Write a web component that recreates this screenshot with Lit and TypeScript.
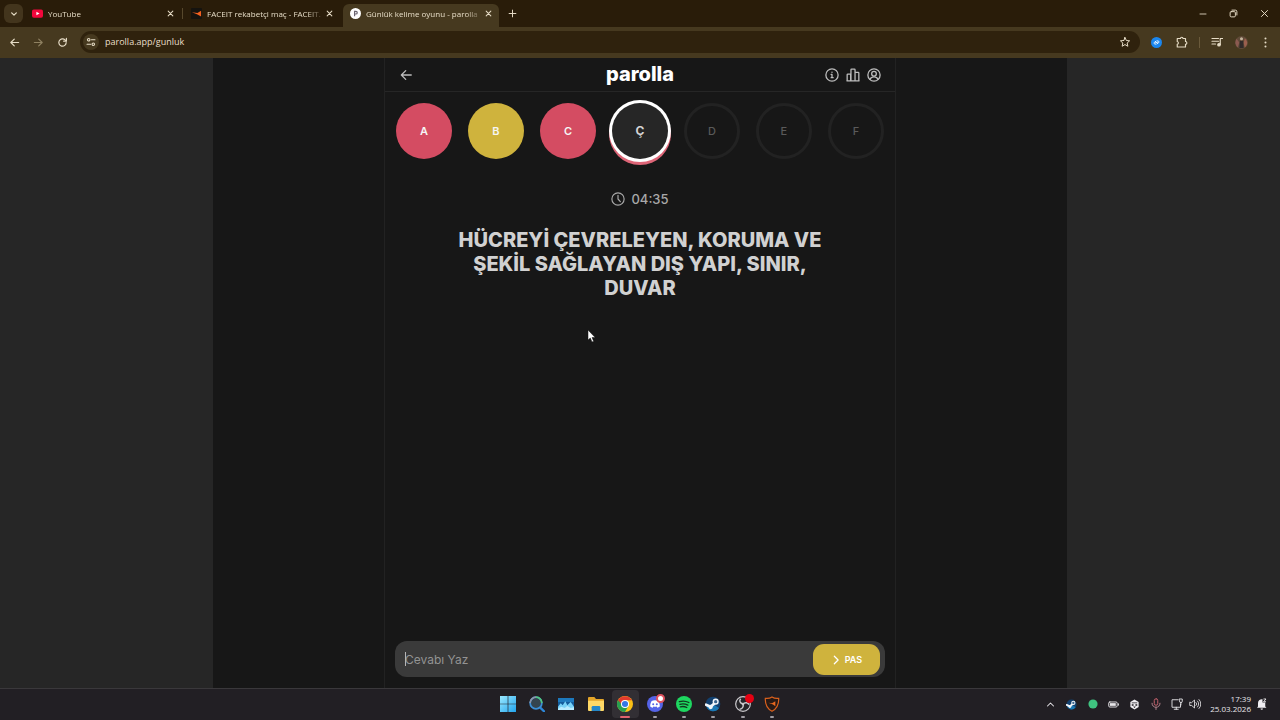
import { LitElement, html, css, svg, nothing } from "lit";
import { customElement, state } from "lit/decorators.js";
import { classMap } from "lit/directives/class-map.js";

const line = (body: unknown, size: number, width = 2) => html`
  <svg width=${size} height=${size} viewBox="0 0 24 24" fill="none" stroke="currentColor"
    stroke-width=${width} stroke-linecap="round" stroke-linejoin="round" aria-hidden="true">${body}</svg>`;

const art = (body: unknown, size: number) => html`
  <svg width=${size} height=${size} viewBox="0 0 24 24" aria-hidden="true">${body}</svg>`;

const glyph = {
  chevronDown: svg`<path d="M5 8.500l7 7 7-7"/>`,
  chevronUp: svg`<path d="M4 16l8-8 8 8"/>`,
  chevronRight: svg`<path d="M8 3l9 9-9 9"/>`,
  close: svg`<path d="M4 4l16 16M20 4L4 20"/>`,
  plus: svg`<path d="M12 3v18M3 12h18"/>`,
  minimize: svg`<path d="M3 12h18"/>`,
  restore: svg`<rect x="3" y="7" width="14" height="14" rx="3"/><path d="M8 3h9a4 4 0 0 1 4 4v9"/>`,
  back: svg`<path d="M21 12H4M11.500 4.500L4 12l7.500 7.500"/>`,
  forward: svg`<path d="M3 12h17M12.500 4.500L20 12l-7.500 7.500"/>`,
  reload: svg`<path d="M20 12a8 8 0 1 1-2.500-5.800L20 8.500"/><path d="M20.500 3v6h-6"/>`,
  tune: svg`<circle cx="6.500" cy="6.500" r="3"/><path d="M13 6.500h8.500"/><circle cx="17.500" cy="17.500" r="3"/><path d="M2.500 17.500H11"/>`,
  star: svg`<path d="M12 3l2.700 6 6.500.600-4.900 4.400 1.400 6.500-5.700-3.400-5.700 3.400 1.400-6.500-4.900-4.400 6.500-.600z"/>`,
  puzzle: svg`<path d="M2.500 5h6.500a2.500 2.500 0 0 1 5 0h5v6a2.500 2.500 0 0 1 0 5.500V22h-16.500v-5.500a2.800 2.800 0 0 0 0-5.500z"/>`,
  queue: svg`<path d="M2 5h13M2 10.500h13M2 16h7M18.500 17V5H23"/><circle cx="16" cy="17.500" r="2.500" fill="currentColor"/>`,
  info: svg`<circle cx="12" cy="12" r="10.500"/><path d="M10.500 11H12v5.500M10.500 16.500h3.500"/><path d="M12 7.200v.100" stroke-width="2.400"/>`,
  chart: svg`<path d="M2 22V11.500a1 1 0 0 1 1-1h5V22M8.500 22V3a1 1 0 0 1 1-1h5a1 1 0 0 1 1 1v19M15.500 7.500H21a1 1 0 0 1 1 1V22M1.500 22h21"/>`,
  user: svg`<circle cx="12" cy="12" r="10.500"/><circle cx="12" cy="9.800" r="4"/><path d="M5 19.500c1.500-3 4-4.300 7-4.300s5.500 1.300 7 4.300"/>`,
  clock: svg`<circle cx="12" cy="12" r="10.500"/><path d="M12 5.500V12l4 4.500"/>`,
};

const steam = svg`
  <circle cx="12" cy="12" r="11" fill="#12406f"/>
  <path d="M2 15a10.500 10.500 0 0 0 19 3L12 12z" fill="#1b78b4"/>
  <path d="M1.500 13l7 3 5-4.500" stroke="#f2f6fa" stroke-width="4" fill="none" stroke-linecap="round"/>
  <circle cx="16" cy="8.500" r="4.600" fill="#f2f6fa"/><circle cx="16" cy="8.500" r="2.500" fill="#3a6690"/>
  <circle cx="8.500" cy="16.500" r="3.200" fill="#f2f6fa"/>`;

const taskbarApps = [
  { name: "Start", mark: "", art: svg`
    <defs><linearGradient id="win" x1="0" y1="0" x2="1" y2="1"><stop offset="0" stop-color="#9be9ff"/><stop offset="1" stop-color="#22a5ee"/></linearGradient></defs>
    <path fill="url(#win)" d="M0 0h11.500v11.500H0zM12.500 0H24v11.500H12.500zM0 12.500h11.500V24H0zM12.500 12.500H24V24H12.500z"/>` },
  { name: "Search", mark: "", art: svg`
    <path d="M16.500 17l6 6" stroke="#2d87d8" stroke-width="3.400" stroke-linecap="round"/>
    <circle cx="10.500" cy="10.500" r="8.800" fill="#34444f" stroke="#3b8fd6" stroke-width="2.600"/>
    <path d="M10.500 1.700a8.800 8.800 0 0 1 8.800 8.800" fill="none" stroke="#52c77e" stroke-width="2.600"/>
    <path d="M1.700 10.500a8.800 8.800 0 0 1 8.800-8.800" fill="none" stroke="#8d94a8" stroke-width="2.600"/>` },
  { name: "Monitor", mark: "", art: svg`
    <rect x="0" y="3" width="24" height="18" rx="1" fill="#135c9c"/><path d="M0 3h24v6H0z" fill="#1d79bd"/>
    <path d="M0 21v-5l4-5 3 3 4-6 3 6 3-3 2-2 5 7v5z" fill="#79d2f7"/><path d="M0 21v-2l5-3 5 2 4-3 5 3 5-1v4z" fill="#b9ecff"/>` },
  { name: "Files", mark: "", art: svg`
    <path d="M0 3a1.500 1.500 0 0 1 1.500-1.500h8l2.500 3h10.500A1.500 1.500 0 0 1 24 6v15H0z" fill="#e4a529"/>
    <path d="M0 7h24v14a1.500 1.500 0 0 1-1.500 1.500h-21A1.500 1.500 0 0 1 0 21z" fill="#ffd866"/>
    <path d="M5.500 22.500V17a2 2 0 0 1 2-2h9a2 2 0 0 1 2 2v5.500z" fill="#2587c8"/>` },
  { name: "Chrome", mark: "active", art: svg`
    <circle cx="12" cy="12" r="12" fill="#fbc116"/>
    <path d="M1.600 6A12 12 0 0 0 12 24l5-9-5-3z" fill="#27a050"/>
    <path d="M1.600 6A12 12 0 0 1 22.400 6.500H12l-5.500 6z" fill="#e33b2e"/>
    <circle cx="12" cy="12" r="6" fill="#fff"/><circle cx="12" cy="12" r="4.600" fill="#3477e6"/>` },
  { name: "Discord", mark: "open", badge: "ring", art: svg`
    <circle cx="12" cy="12" r="12" fill="#5563e8"/>
    <path d="M7 7.500c3-1.300 7-1.300 10 0 1.500 2.500 2.300 5.500 2.200 8.200-1.200 1-2.300 1.500-3.700 1.800l-1-1.600c-1.700.400-3.300.400-5 0l-1 1.600c-1.400-.300-2.500-.800-3.700-1.800-.100-2.700.700-5.700 2.200-8.200z" fill="#fff"/>
    <circle cx="9.300" cy="12.300" r="1.500" fill="#5563e8"/><circle cx="14.700" cy="12.300" r="1.500" fill="#5563e8"/>` },
  { name: "Spotify", mark: "open", art: svg`
    <circle cx="12" cy="12" r="12" fill="#1ed760"/>
    <path d="M5 8.500c5-1.400 10-1 14.300 1.300M5.800 12.500c4.200-1.200 8.300-.700 12 1.200M6.500 16.200c3.500-.900 6.800-.500 9.700 1.100" fill="none" stroke="#12351f" stroke-width="2" stroke-linecap="round"/>` },
  { name: "Steam", mark: "open", art: steam },
  { name: "OBS", mark: "open", badge: "dot", art: svg`
    <circle cx="12" cy="12" r="11" fill="#252428" stroke="#c9c7cb" stroke-width="1.800"/>
    <path d="M12 12c-5-1-6-5-3.500-8M12 12c3.500-3.500 7.500-2 9 1M12 12c1.500 4.500-1.500 7.500-5 8" fill="none" stroke="#c9c7cb" stroke-width="2.200"/>
    <circle cx="12" cy="12" r="2" fill="#c9c7cb"/>` },
  { name: "Faceit guard", mark: "open", art: svg`
    <path d="M12 1.500C9 3.500 5.500 4 2 3.500c-.500 9 1.500 15 10 19.500 8.500-4.500 10.500-10.500 10-19.500-3.500.500-7 0-10-2z" fill="#271a16" stroke="#d9601d" stroke-width="1.800"/>
    <path d="M6.500 10l5.500.800 5-3v7.500l-3.500-2.500z" fill="#e8681f"/>` },
];

const tabs = [
  { title: "YouTube", active: false, icon: svg`
    <rect x="0" y="3" width="24" height="18" rx="4" fill="#f2073c"/><path d="M9.500 8v8l7-4z" fill="#fff"/>` },
  { title: "FACEIT rekabetçi maç - FACEIT.c", active: false, icon: svg`
    <rect width="24" height="24" rx="2" fill="#15130f"/><path d="M2 9.500l12 1.500 8-5v12.500l-9-5z" fill="#f2601f"/>` },
  { title: "Günlük kelime oyunu - parolla", active: true, icon: svg`
    <circle cx="12" cy="12" r="12" fill="#fff"/><path d="M10 18V7.500h3a2.800 2.800 0 0 1 0 5.600h-3" fill="none" stroke="#6b6470" stroke-width="2.600"/>` },
];

@customElement("browser-chrome")
class BrowserChrome extends LitElement {
  static styles = css`
    :host { display: block; flex: none; font-family: "Open Sans", "Noto Sans", sans-serif; color: #e6dcc6; }
    button { font: inherit; color: inherit; background: none; border: 0; padding: 0; margin: 0; display: grid; place-items: center; flex: none; }
    svg { display: block; flex: none; }
    .strip { display: flex; align-items: flex-end; height: 27px; background: #291c09; }
    .search { width: 19px; height: 19px; margin: 0 2px 4px 4px; border-radius: 6px; background: #43351d; }
    .tab { display: flex; align-items: center; gap: 5px; width: 156px; height: 23px; padding: 0 7px 4px; box-sizing: border-box; border-radius: 6px 6px 0 0; font-size: 8px; line-height: 12px; }
    .tab.active { background: #46391f; }
    .title { flex: 1; min-width: 0; white-space: nowrap; mask-image: linear-gradient(90deg, #000 88%, #0003); }
    .sep { width: 1px; height: 11px; margin: 0 1px 8px; background: #57482c; flex: none; }
    .sep.off { background: none; }
    .new { width: 20px; height: 27px; }
    .grow { flex: 1; }
    .win { width: 31px; height: 27px; }
    .bar { display: flex; align-items: center; height: 31px; box-sizing: border-box; background: #46391f; padding: 0 0 1px 2px; }
    .nav { width: 24px; height: 24px; }
    .nav.off { color: #8f8161; }
    .omni { flex: 1; display: flex; align-items: center; height: 22px; margin: 0 4px 0 6px; padding: 0 3px; box-sizing: border-box; border-radius: 11px; background: #2f220d; }
    .site { width: 16px; height: 16px; border-radius: 8px; background: #46391f; }
    .url { flex: 1; min-width: 0; margin-left: 6px; padding: 0; border: 0; outline: 0; background: none; color: #e9dfca; font-family: inherit; font-size: 9px; line-height: 14px; }
    .mark { width: 25px; height: 22px; }
    .rule { width: 1px; height: 11px; margin: 0 4px 0 5px; background: #6a5a3b; }
    .more { width: 22px; margin-right: 4px; }
  `;

  render() {
    return html`
      <div class="strip">
        <button class="search" aria-label="Search tabs">${line(glyph.chevronDown, 8, 3.8)}</button>
        ${tabs.map((tab, i) => html`
          <div class=${classMap({ tab: true, active: tab.active })}>
            ${art(tab.icon, 11)}
            <span class="title">${tab.title}</span>
            <button aria-label="Close tab">${line(glyph.close, 7, 3.6)}</button>
          </div>
          <span class=${classMap({ sep: true, off: i !== 0 })}></span>`)}
        <button class="new" aria-label="New tab">${line(glyph.plus, 9, 2.6)}</button>
        <span class="grow"></span>
        <button class="win" aria-label="Minimize">${line(glyph.minimize, 8, 2.6)}</button>
        <button class="win" aria-label="Restore">${line(glyph.restore, 9, 2.6)}</button>
        <button class="win" aria-label="Close">${line(glyph.close, 9, 2.6)}</button>
      </div>
      <div class="bar">
        <button class="nav" aria-label="Back">${line(glyph.back, 11, 2.6)}</button>
        <button class="nav off" aria-label="Forward">${line(glyph.forward, 11, 2.6)}</button>
        <button class="nav" aria-label="Reload">${line(glyph.reload, 11, 2.6)}</button>
        <div class="omni">
          <button class="site" aria-label="Site information">${line(glyph.tune, 10, 2.6)}</button>
          <input class="url" aria-label="Address" .value=${"parolla.app/gunluk"} />
          <button class="mark" aria-label="Bookmark">${line(glyph.star, 12, 2)}</button>
        </div>
        <button class="mark" aria-label="Shazam">${art(svg`<circle cx="12" cy="12" r="12" fill="#1a86ee"/>
          <path d="M10.500 15.500c-3 1-5-2-3-4l3.500-2.500M13.500 8.500c3-1 5 2 3 4L13 15M10 12.500l4-1" fill="none" stroke="#fff" stroke-width="2" stroke-linecap="round"/>`, 11)}</button>
        <button class="mark" aria-label="Extensions">${line(glyph.puzzle, 12, 2.3)}</button>
        <span class="rule"></span>
        <button class="mark" aria-label="Media">${line(glyph.queue, 12, 2.4)}</button>
        <button class="mark" aria-label="Profile">${art(svg`<circle cx="12" cy="12" r="12" fill="#5f4a38"/>
          <path d="M3 5a12 12 0 0 0 2 16l3-9z" fill="#8b5a50"/><path d="M18 4c6 5 6 12 0 17l-2-8z" fill="#9a5f4e"/>
          <circle cx="12" cy="5" r="2.800" fill="#c3b49d"/><path d="M8 22l1-13h6l1 13z" fill="#302a2a"/>`, 13)}</button>
        <button class="more" aria-label="Menu">${art(svg`<g fill="#e6dcc6"><circle cx="12" cy="3.500" r="2.200"/><circle cx="12" cy="12" r="2.200"/><circle cx="12" cy="20.500" r="2.200"/></g>`, 11)}</button>
      </div>`;
  }
}

type Status = "wrong" | "passed" | "current" | "todo";

@customElement("parolla-game")
class ParollaGame extends LitElement {
  @state() letters: { char: string; status: Status }[] = [
    { char: "A", status: "wrong" },
    { char: "B", status: "passed" },
    { char: "C", status: "wrong" },
    { char: "Ç", status: "current" },
    { char: "D", status: "todo" },
    { char: "E", status: "todo" },
    { char: "F", status: "todo" },
  ];

  static styles = css`
    :host { flex: 1; min-height: 0; display: flex; justify-content: center; background: #262626; font-family: Inter, Roboto, sans-serif; color: #d1d1d1; }
    svg { display: block; flex: none; }
    button { font: inherit; color: inherit; background: none; border: 0; padding: 0; margin: 0; }
    .page { width: 66.66%; display: flex; justify-content: center; background: #171717; }
    .column { position: relative; width: 60%; box-sizing: border-box; display: flex; flex-direction: column; border: solid #222; border-width: 0 1px; }
    header { display: grid; grid-template-columns: 1fr auto 1fr; align-items: center; height: 33px; padding: 0 14px; border-bottom: 1px solid #262626; color: #bdbdbd; }
    h1 { margin: 0; font-size: 20px; line-height: 22px; padding-bottom: 2px; font-weight: 800; color: #fff; }
    .actions { display: flex; justify-content: flex-end; gap: 7px; }
    .back { justify-self: start; }
    .letters { display: flex; justify-content: space-between; list-style: none; margin: 0; padding: 11px 11px 0; }
    .letter { width: 56px; height: 56px; box-sizing: border-box; border-radius: 50%; display: grid; place-items: center; font-size: 11px; line-height: 16px; font-weight: 600; color: #f5f5f5; }
    .wrong { background: #d44c62; }
    .passed { background: #cfb33d; }
    .todo { border: 3px solid #222; color: #5a5a5a; font-weight: 500; }
    .current { background: #262626; color: #d4d4d4; font-size: 12px; font-weight: 700; box-shadow: 0 0 0 3px #fff, 0 3px 0 3px #dd6577; }
    .timer { display: flex; justify-content: center; align-items: center; gap: 6px; margin-top: 31px; font-size: 13px; line-height: 18px; font-weight: 500; color: #a9a9a9; }
    .question { margin: 20px 64px 0; font-size: 20px; line-height: 24px; font-weight: 800; text-align: center; color: #d1d1d1; }
    form { position: relative; display: flex; align-items: stretch; gap: 4px; height: 36px; box-sizing: border-box; margin: auto 10px 11px; padding: 3px 5px 2px 10px; border-radius: 12px; background: #3a3a3a; }
    .answer { flex: 1; min-width: 0; padding: 0; border: 0; outline: 0; background: none; color: #e5e5e5; font-family: inherit; font-size: 12px; line-height: 16px; }
    .answer::placeholder { color: #939393; opacity: 1; }
    .caret { position: absolute; left: 10px; top: 11px; width: 1px; height: 14px; background: #b5b5b5; }
    .pass { display: flex; align-items: center; justify-content: center; gap: 4px; width: 67px; border-radius: 11px; background: #cfb33d; color: #fff; font-size: 9px; line-height: 14px; font-weight: 600; }
    .pointer { position: absolute; left: 202px; top: 271px; }
  `;

  render() {
    return html`
      <div class="page">
        <main class="column">
          <header>
            <button class="back" aria-label="Geri">${line(glyph.back, 14, 2.2)}</button>
            <h1>parolla</h1>
            <div class="actions">
              <button aria-label="Bilgi">${line(glyph.info, 14, 2.2)}</button>
              <button aria-label="İstatistik">${line(glyph.chart, 14, 2.2)}</button>
              <button aria-label="Profil">${line(glyph.user, 14, 2.2)}</button>
            </div>
          </header>
          <ol class="letters">
            ${this.letters.map((l) => html`<li class="letter ${l.status}">${l.char}</li>`)}
          </ol>
          <div class="timer">${line(glyph.clock, 14, 2)}<span>04:35</span></div>
          <h2 class="question">HÜCREYİ ÇEVRELEYEN, KORUMA VE ŞEKİL SAĞLAYAN DIŞ YAPI, SINIR, DUVAR</h2>
          <form @submit=${(e: Event) => e.preventDefault()}>
            <input class="answer" aria-label="Cevabı Yaz" placeholder="Cevabı Yaz" />
            <span class="caret"></span>
            <button class="pass" type="button">${line(glyph.chevronRight, 10, 3)}PAS</button>
          </form>
          <svg class="pointer" width="9" height="14" viewBox="0 0 9 14" aria-hidden="true">
            <path d="M1 1v10l2.300-2 1.700 4 1.700-.800L5 8.500h3.200z" fill="#fff" stroke="#111" stroke-width=".500"/>
          </svg>
        </main>
      </div>`;
  }
}

@customElement("desktop-taskbar")
class DesktopTaskbar extends LitElement {
  static styles = css`
    :host { flex: none; display: grid; grid-template-columns: 1fr 294px 1fr; height: 32px; box-shadow: inset 0 1px #3a383b; background: #221f24; color: #e8e6ea; font-family: "Open Sans", "Noto Sans", sans-serif; }
    svg { display: block; flex: none; }
    button { position: relative; color: inherit; background: none; border: 0; padding: 0; margin: 0; display: grid; place-items: center; }
    .apps { grid-column: 2; display: grid; grid-template-columns: repeat(10, 1fr); }
    .app { border-radius: 4px; margin: 2px 1px; }
    .app.active { background: #322f34; }
    .app.active::after, .app.open::after { content: ""; position: absolute; bottom: 0; left: 50%; width: 4px; height: 2px; margin-left: -2px; border-radius: 1px; background: #a19ea4; }
    .app.active::after { width: 10px; margin-left: -5px; background: #e0626e; }
    .badge { position: absolute; top: 4px; right: 3px; width: 9px; height: 9px; box-sizing: border-box; border-radius: 50%; background: #e60012; }
    .badge.ring { background: #fff; border: 2px solid #e0525e; }
    .tray { display: flex; align-items: center; justify-content: flex-end; padding-right: 12px; }
    .item { width: 21px; height: 24px; flex: none; }
    .item.slim { width: 16px; }
    .clock { margin: 0 5px 0 7px; text-align: right; font-size: 8px; line-height: 10px; white-space: nowrap; }
  `;

  render() {
    return html`
      <nav class="apps" aria-label="Taskbar">
        ${taskbarApps.map((app) => html`
          <button class="app ${app.mark}" aria-label=${app.name}>
            ${art(app.art, 16)}
            ${app.badge ? html`<span class="badge ${app.badge}"></span>` : nothing}
          </button>`)}
      </nav>
      <div class="tray">
        <button class="item" aria-label="Hidden icons">${line(glyph.chevronUp, 9, 2.8)}</button>
        <button class="item" aria-label="Steam">${art(steam, 11)}</button>
        <button class="item" aria-label="Status">${art(svg`<circle cx="12" cy="12" r="11" fill="#3fc380"/>`, 10)}</button>
        <button class="item" aria-label="Battery">${line(svg`<rect x="1.500" y="6.500" width="18.500" height="11" rx="2.500"/><rect x="4" y="9" width="13" height="6" fill="currentColor" stroke="none"/><path d="M23 10.500v3"/>`, 11, 2)}</button>
        <button class="item" aria-label="Security">${art(svg`<path d="M12 1l9 5.500v11L12 23l-9-5.500v-11z" fill="#f0eef2"/><path d="M6 7.500h12v2H6zM6 11.500h4v3H6zM14 11.500h4v3h-4zM9 16.500h6l-3 3z" fill="#221f24"/>`, 11)}</button>
        <button class="item" aria-label="Microphone">${line(svg`<rect x="8.500" y="1.500" width="7" height="13" rx="3.500" stroke="#c4616c"/><path d="M4 10.500c0 5 3.500 8 8 8s8-3 8-8M12 18.500v4.500" stroke="#b0808a"/>`, 12, 2)}</button>
        <button class="item" aria-label="Network">${line(svg`<path d="M14 3.500H2v15h17V12M6.500 22.500h8M10.500 18.500v4"/><path d="M17 2h5.500v4.500a2.700 2.700 0 0 1-5.500 0zM19.800 9v5"/>`, 12, 1.8)}</button>
        <button class="item slim" aria-label="Volume">${line(svg`<path d="M1.500 9v6h4l5.500 5V4L5.500 9zM14 9a4 4 0 0 1 0 6M17 6a8.500 8.500 0 0 1 0 12M20 3a12.500 12.500 0 0 1 0 18"/>`, 12, 1.7)}</button>
        <div class="clock">17:39<br />25.03.2026</div>
        <button aria-label="Notifications">${art(svg`<path d="M4 17V10a7.500 7.500 0 0 1 9-7.300V9h5.500v8l2.500 2.500H2z" fill="#f0eef2"/><path d="M9 21h5a2.500 2.500 0 0 1-5 0z" fill="#f0eef2"/><path d="M15 2h5l-5 5.500h5" fill="none" stroke="#f0eef2" stroke-width="1.800"/>`, 12)}</button>
      </div>`;
  }
}

@customElement("app-root")
class AppRoot extends LitElement {
  static styles = css`
    :host { display: flex; flex-direction: column; height: 100vh; overflow: hidden; }
  `;

  render() {
    return html`
      <browser-chrome></browser-chrome>
      <parolla-game></parolla-game>
      <desktop-taskbar></desktop-taskbar>`;
  }
}
